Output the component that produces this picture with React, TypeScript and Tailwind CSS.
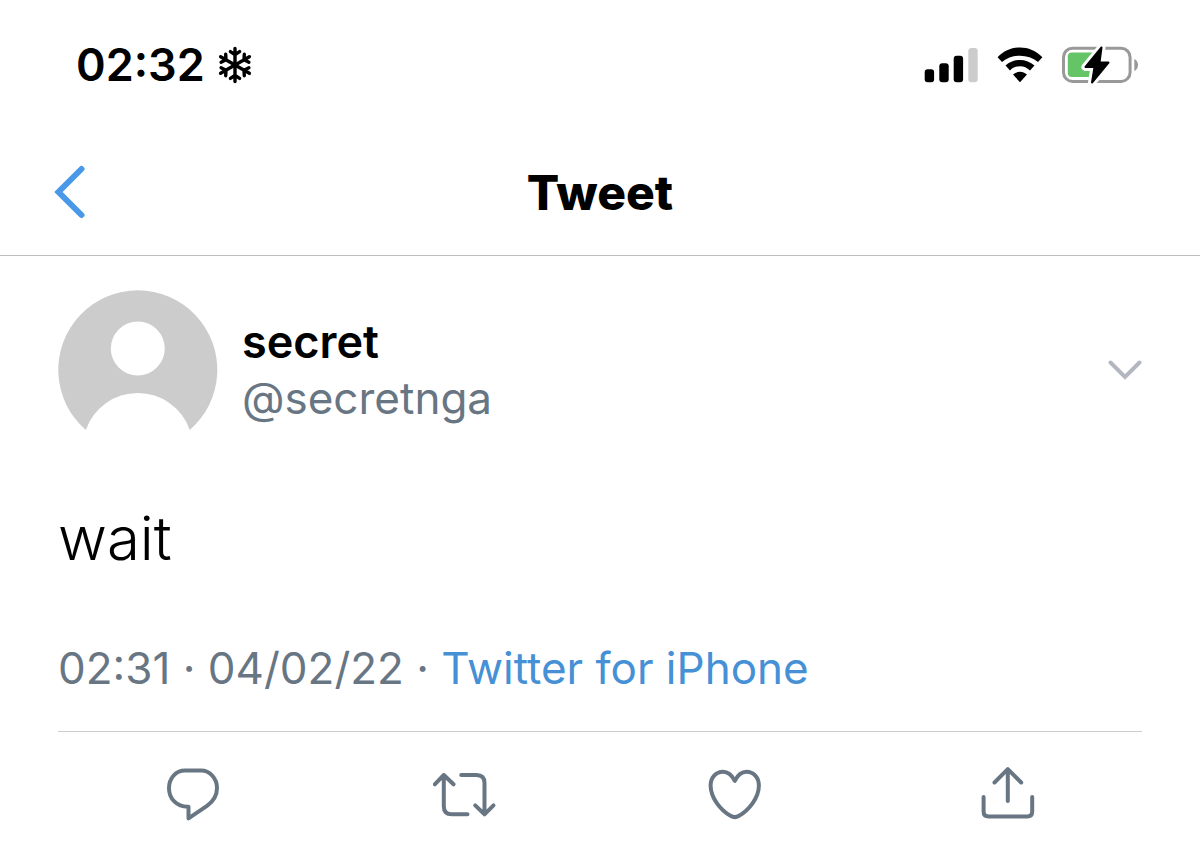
import type { ReactNode } from "react";

function Snowflake() {
  return (
    <svg
      width="36"
      height="38"
      viewBox="-18 -19 36 38"
      fill="none"
      stroke="currentColor"
      strokeWidth="3.4"
      strokeLinecap="round"
      aria-hidden="true"
    >
      {[0, 60, 120, 180, 240, 300].map((angle) => (
        <path key={angle} d="M0 0V-16.6M-4.6 -13.4L0 -10.4L4.6 -13.4" transform={`rotate(${angle})`} />
      ))}
    </svg>
  );
}

function Signal() {
  return (
    <svg width="54" height="42" viewBox="0 0 54 42" role="img" aria-label="Signal">
      <rect x="0.7" y="25.3" width="9.4" height="13" rx="3" />
      <rect x="15.3" y="19.3" width="9.4" height="19" rx="3" />
      <rect x="29.7" y="11.7" width="9.4" height="26.6" rx="3" />
      <rect x="44.3" y="4" width="9.4" height="34.3" rx="3" fill="#cccccc" />
    </svg>
  );
}

function Wifi() {
  return (
    <svg width="46" height="42" viewBox="0 -3 46 42" role="img" aria-label="Wi-Fi">
      <path d="M0.6 10.2C13 -2.7 33 -2.7 45.4 10.2L41 15C31 6.5 15 6.5 5 15Z" />
      <path d="M8.5 18.6C16.5 11.1 29.5 11.1 37.5 18.6L33 23.4C27.5 17.7 18.5 17.7 13 23.4Z" />
      <path d="M16 27.6C20 23.7 26 23.7 30 27.6L23 35.3Z" />
    </svg>
  );
}

function Battery() {
  return (
    <svg width="77" height="42" viewBox="0 0 77 42" role="img" aria-label="Battery charging">
      <rect x="1.5" y="4.2" width="66.6" height="33.2" rx="9" fill="none" stroke="#999999" strokeWidth="3" />
      <path d="M72.3 15C77.3 17 77.3 25 72.3 27Z" fill="#999999" />
      <path d="M10 8.6H34V33H10Q5.8 33 5.8 28.8V12.8Q5.8 8.6 10 8.6Z" fill="#65c466" />
      <path
        d="M39.5 3.5L23.5 23H32.5L30 38.5L46.5 18.5H37.5Z"
        stroke="#ffffff"
        strokeWidth="8"
        strokeLinejoin="round"
      />
      <path
        d="M39.5 3.5L23.5 23H32.5L30 38.5L46.5 18.5H37.5Z"
        stroke="#000000"
        strokeWidth="2"
        strokeLinejoin="round"
      />
    </svg>
  );
}

function ActionButton({ label, children }: { label: string; children: ReactNode }) {
  return (
    <button type="button" aria-label={label} className="flex justify-center">
      <svg
        width="64"
        height="64"
        viewBox="1 0 64 64"
        fill="none"
        stroke="currentColor"
        strokeWidth="4"
        strokeLinecap="round"
        strokeLinejoin="round"
      >
        {children}
      </svg>
    </button>
  );
}

export default function App() {
  return (
    <div className="min-h-screen bg-white font-['Inter',sans-serif] text-black">
      {/* Status bar */}
      <div className="flex h-[130px] items-center justify-between pr-[61px] pl-[76px]">
        <div className="flex items-center gap-3">
          <span className="text-[45px] font-semibold">02:32</span>
          <Snowflake />
        </div>
        <div className="flex items-center gap-[19px]">
          <Signal />
          <Wifi />
          <Battery />
        </div>
      </div>

      <header className="grid h-[126px] grid-cols-[1fr_auto_1fr] items-center border-b border-[#bdbdbd] px-[54px]">
        <button type="button" aria-label="Back" className="justify-self-start text-[#4a99e9]">
          <svg width="32" height="56" viewBox="0 0 32 56" fill="none" stroke="currentColor" strokeWidth="6" strokeLinecap="round">
            <path d="M27.5 4L4.5 27L27.5 50" />
          </svg>
        </button>
        <h1 className="text-[48px] font-extrabold">Tweet</h1>
      </header>

      <main className="px-[58px] pt-[34px]">
        <div className="flex items-center">
          <svg width="160" height="160" viewBox="0 0 160 160" role="img" aria-label="secret">
            <path
              d="M27.8 140A79.5 79.5 0 1 1 131.8 140A55 55 0 0 0 27.8 140ZM79.8 31.5A27 27 0 1 0 79.8 85.5A27 27 0 1 0 79.8 31.5Z"
              fill="#cccccc"
              fillRule="evenodd"
            />
          </svg>
          <div className="ml-6 leading-[56px]">
            <p className="text-[45px] font-semibold">secret</p>
            <p className="text-[44px] text-[#687684]">@secretnga</p>
          </div>
          <button type="button" aria-label="More" className="ml-auto text-[#b3b8c0]">
            <svg width="34" height="22" viewBox="0 0 34 22" fill="none" stroke="currentColor" strokeWidth="4" strokeLinecap="round">
              <path d="M2.5 3.5L17 18L31.5 3.5" />
            </svg>
          </button>
        </div>

        <p className="mt-12 text-[60px] leading-[80px] font-[350]">wait</p>

        <p className="mt-[60px] border-b border-[#cccccc] pb-[33px] text-[44px] leading-[60px] text-[#687684]">
          <time>02:31 · 04/02/22</time> ·{" "}
          <a href="#" className="text-[#4690d6]">
            Twitter for iPhone
          </a>
        </p>

        <div className="grid grid-cols-4 pt-[30px] pb-6 text-[#687684]">
          <ActionButton label="Reply">
            <path d="M24 8.6H40C49 8.6 56 16.5 56 26C56 34 52 39.5 46 43.8L27.5 56.3V44.7C15.5 45 8 36.5 8 26.2C8 16.5 14.5 8.6 24 8.6Z" />
          </ActionButton>
          <ActionButton label="Retweet">
            <path d="M2.8 22.3L11.8 13L21.5 22.3M11.8 13V44.3Q11.8 52.3 19.8 52.3H35.5" />
            <path d="M29.2 13H44.5Q52.5 13 52.5 21V52.3M43.2 43.4L52.5 52.3L61.5 43.4" />
          </ActionButton>
          <ActionButton label="Like">
            <path d="M31.8 18.8C28.5 12.5 24.5 9.8 20 9.8C13 9.8 7.6 15.5 7.6 23.5C7.6 36 18 48.5 27.5 53.8Q31.8 56.4 36 53.8C45.5 48.5 55.9 36 55.9 23.5C55.9 15.5 50.5 9.8 43.5 9.8C39 9.8 35 12.5 31.8 18.8Z" />
          </ActionButton>
          <ActionButton label="Share">
            <path d="M20.5 20.5L33.8 7.2L47.2 20.5M33.8 7.2V39M9.6 35V49.5Q9.6 54.5 14.6 54.5H53.2Q58.2 54.5 58.2 49.5V35" />
          </ActionButton>
        </div>
      </main>
    </div>
  );
}
